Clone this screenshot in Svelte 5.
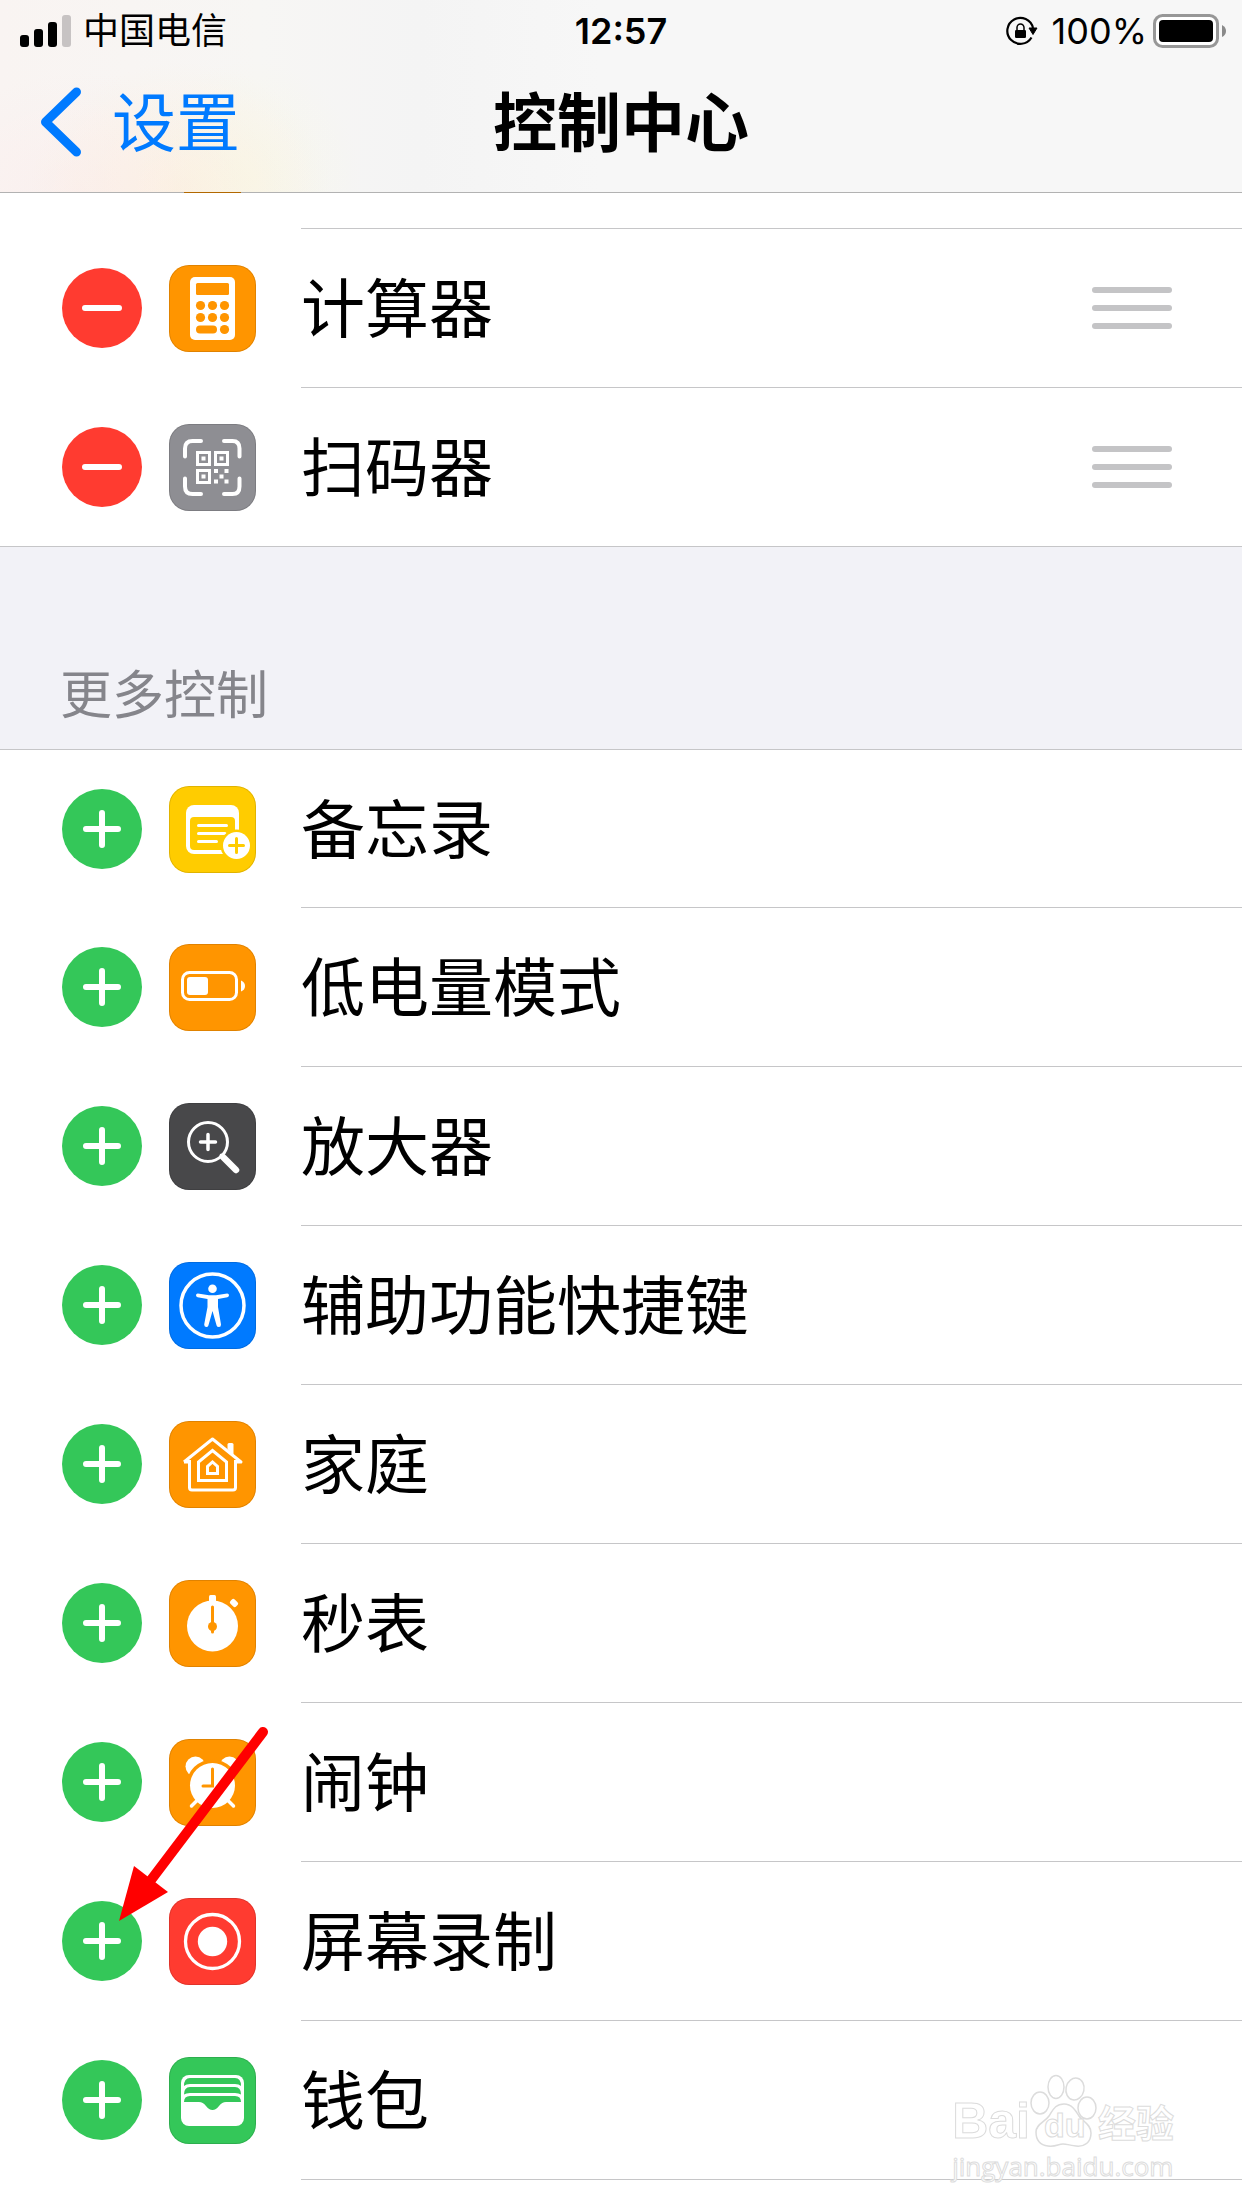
<script lang="ts">
	interface Control {
		id: string;
		name: string;
		color: string;
	}

	let included: Control[] = $state([
		{ id: 'calculator', name: '计算器', color: '#ff9500' },
		{ id: 'scanner', name: '扫码器', color: '#8e8e93' }
	]);

	let more: Control[] = $state([
		{ id: 'notes', name: '备忘录', color: '#ffcc00' },
		{ id: 'battery', name: '低电量模式', color: '#ff9500' },
		{ id: 'magnifier', name: '放大器', color: '#48484a' },
		{ id: 'accessibility', name: '辅助功能快捷键', color: '#007aff' },
		{ id: 'home', name: '家庭', color: '#ff9500' },
		{ id: 'stopwatch', name: '秒表', color: '#ff9500' },
		{ id: 'alarm', name: '闹钟', color: '#ff9500' },
		{ id: 'record', name: '屏幕录制', color: '#ff3b30' },
		{ id: 'wallet', name: '钱包', color: '#34c759' }
	]);

	function add(item: Control) {
		more = more.filter((c) => c.id !== item.id);
		included = [...included, item];
	}

	function remove(item: Control) {
		included = included.filter((c) => c.id !== item.id);
		more = [...more, item];
	}
</script>

{#snippet icon(item: Control)}
	<svg class="icon" viewBox="0 0 87 87" aria-hidden="true">
		<rect width="87" height="87" rx="20" fill={item.color} />
		<rect
			x="0.5"
			y="0.5"
			width="86"
			height="86"
			rx="19.5"
			fill="none"
			stroke="#000"
			stroke-opacity="0.12"
		/>
		{#if item.id === 'calculator'}
			<rect x="21" y="12" width="45" height="63" rx="5" fill="#fff" />
			<g fill={item.color}>
				<rect x="27" y="18" width="33" height="12" rx="1.5" />
				<circle cx="31.5" cy="40.5" r="4.6" />
				<circle cx="43.5" cy="40.5" r="4.6" />
				<circle cx="55.5" cy="40.5" r="4.6" />
				<circle cx="31.5" cy="52.5" r="4.6" />
				<circle cx="43.5" cy="52.5" r="4.6" />
				<circle cx="55.5" cy="52.5" r="4.6" />
				<rect x="27" y="60.5" width="21" height="8" rx="4" />
				<circle cx="55.5" cy="64.5" r="4.6" />
			</g>
		{:else if item.id === 'scanner'}
			<g fill="none" stroke="#fff" stroke-width="4" stroke-linecap="round">
				<path d="M32 17H23.5Q16 17 16 24.5V32.5" />
				<path d="M55 17H63.5Q70.5 17 70.5 24.5V32.5" />
				<path d="M32 70H23.5Q16 70 16 62.5V54.5" />
				<path d="M55 70H63.5Q70.5 70 70.5 62.5V54.5" />
			</g>
			<g fill="none" stroke="#fff" stroke-width="3">
				<rect x="28.5" y="28.5" width="12" height="12" />
				<rect x="46.5" y="28.5" width="12" height="12" />
				<rect x="28.5" y="46.5" width="12" height="12" />
			</g>
			<path
				fill="#fff"
				d="M32.500 32.500h4v4h-4zM50.500 32.500h4v4h-4zM32.500 50.500h4v4h-4zM45 45h4v4h-4zM55.500 45h4v4h-4zM50.500 50.500h4v4h-4zM45 55.500h4v4h-4zM55.500 55.500h4v4h-4z"
			/>
		{:else if item.id === 'notes'}
			<rect x="17" y="19" width="53" height="49" rx="8" fill="#fff" />
			<rect x="21" y="31" width="45" height="33" rx="4" fill={item.color} />
			<path
				d="M29.500 39.500H57.500M29.500 47.500H56M29.500 55.500H47.500"
				stroke="#fff"
				stroke-width="3"
				stroke-linecap="round"
			/>
			<circle cx="67.5" cy="59.5" r="16" fill={item.color} />
			<circle cx="67.5" cy="59.5" r="13.5" fill="#fff" />
			<path
				d="M60.500 59.500H74.500M67.500 52.500V66.500"
				stroke={item.color}
				stroke-width="3"
				stroke-linecap="round"
			/>
		{:else if item.id === 'battery'}
			<rect
				x="13.5"
				y="28.5"
				width="54"
				height="27"
				rx="7"
				fill="none"
				stroke="#fff"
				stroke-width="3"
			/>
			<rect x="18" y="33" width="21" height="18" rx="3" fill="#fff" />
			<path d="M72 36.500Q76 38 76 42T72 47.500Z" fill="#fff" />
		{:else if item.id === 'magnifier'}
			<g fill="none" stroke="#fff" stroke-linecap="round">
				<circle cx="39" cy="39" r="19.5" stroke-width="3" />
				<path d="M31.500 39H46.500M39 31.500V46.500" stroke-width="3.5" />
				<path d="M52.500 52.500L55 55" stroke-width="4" />
				<path d="M54.500 54.500L67 67" stroke-width="6.5" />
			</g>
		{:else if item.id === 'accessibility'}
			<circle cx="43.5" cy="43.5" r="31.5" fill="none" stroke="#fff" stroke-width="3.5" />
			<circle cx="43.5" cy="26.7" r="4.3" fill="#fff" />
			<path
				fill="#fff"
				d="M28.800 31.600L40 33.200H47L58.200 31.600Q60 31.700 60 33.300T58.400 35.200L49 37V45L52 62.500Q52 65 50 65T47.600 63.500L43.500 49L39.400 63.500Q38.800 65.200 37 65T35.200 62.500L38.500 45V37L28.600 35.200Q27 34.800 27 33.300T28.800 31.600Z"
			/>
		{:else if item.id === 'home'}
			<g fill="none" stroke="#fff" stroke-width="3" stroke-linejoin="round">
				<path d="M20.500 39V66.500Q20.500 69 23 69H64Q66.500 69 66.500 66.500V39" />
				<path d="M15 41L43.500 18L72 41H66.500M15 41H20.500" />
				<path d="M29.500 59.500V41L43.500 29.500L57.500 41V59.500Z" stroke-linejoin="miter" />
				<path d="M38.500 52.500V45.500L43.500 41L48.500 45.500V52.500Z" stroke-linejoin="miter" />
			</g>
			<path d="M58.500 28V23.500Q58.500 22 60 22H63Q64.500 22 64.500 23.500V34.500Z" fill="#fff" />
		{:else if item.id === 'stopwatch'}
			<circle cx="43.5" cy="46" r="25.5" fill="#fff" />
			<rect x="40" y="15" width="7" height="10" rx="1.5" fill="#fff" />
			<rect
				x="61"
				y="20"
				width="8"
				height="6"
				rx="2"
				fill="#fff"
				transform="rotate(45 65 23)"
			/>
			<path d="M43.500 27V52" stroke={item.color} stroke-width="3" stroke-linecap="round" />
			<circle cx="43.5" cy="46.5" r="4.5" fill={item.color} />
		{:else if item.id === 'alarm'}
			<circle cx="26.5" cy="27.5" r="10" fill="#fff" />
			<circle cx="60.5" cy="27.5" r="10" fill="#fff" />
			<circle cx="43.5" cy="46.5" r="26" fill={item.color} />
			<path
				d="M28.500 61L22.500 67M58.500 61L64.500 67"
				stroke="#fff"
				stroke-width="3.5"
				stroke-linecap="round"
			/>
			<circle cx="43.5" cy="46.5" r="22.5" fill="#fff" />
			<path
				d="M43.500 30V47H34"
				fill="none"
				stroke={item.color}
				stroke-width="3"
				stroke-linecap="round"
			/>
		{:else if item.id === 'record'}
			<circle cx="43.5" cy="43.5" r="27" fill="none" stroke="#fff" stroke-width="3.3" />
			<circle cx="43.5" cy="43.5" r="14.7" fill="#fff" />
		{:else if item.id === 'wallet'}
			<rect x="12" y="18" width="63" height="51" rx="8" fill="#fff" />
			<g fill={item.color}>
				<path d="M15 29Q15 21 21 21H66Q72 21 72 29Q70 27 66 27H21Q17 27 15 29Z" />
				<path d="M15 37.500Q15 30 21 30H66Q72 30 72 37.500Q70 36 66 36H21Q17 36 15 37.500Z" />
				<path
					d="M15 45Q15 39 21 39H66Q72 39 72 45H57Q53 45 50 49Q47 53 43.500 53T37 49Q34 45 30 45Z"
				/>
			</g>
		{/if}
	</svg>
{/snippet}

<div class="page">
	<header>
		<div class="status">
			<div class="status__left">
				<svg class="signal" viewBox="0 0 51 32" aria-hidden="true">
					<rect x="0" y="20" width="9" height="12" rx="3" />
					<rect x="14" y="14" width="9" height="18" rx="3" />
					<rect x="28" y="7" width="9" height="25" rx="3" />
					<rect x="42" y="0" width="9" height="32" rx="3" fill="#c7c3c3" />
				</svg>
				<span>中国电信</span>
			</div>
			<time>12:57</time>
			<div class="status__right">
				<svg class="lock" viewBox="0 0 32 30" aria-hidden="true">
					<path
						d="M25.500 21.500A13 13 0 1 1 27 12"
						fill="none"
						stroke="#000"
						stroke-width="2.2"
					/>
					<path d="M23 12H31L27 18.500Z" stroke="#000" stroke-linejoin="round" />
					<rect x="9" y="14" width="11" height="8" rx="1.2" />
					<path
						d="M11 14.500V11.500a3.500 3.500 0 0 1 7 0V14.500"
						fill="none"
						stroke="#000"
						stroke-width="1.5"
					/>
				</svg>
				<span>100%</span>
				<svg class="charge" viewBox="0 0 73 34" aria-hidden="true">
					<rect
						x="1.5"
						y="1.5"
						width="63"
						height="31"
						rx="8"
						fill="#fff"
						stroke="#979797"
						stroke-width="3"
					/>
					<rect x="6" y="6" width="54" height="22" rx="4" />
					<path d="M69 11Q73 13 73 17T69 23Z" fill="#8a8a8a" />
				</svg>
			</div>
		</div>
		<nav>
			<a class="back" href="#settings">
				<svg viewBox="0 0 42 70" aria-hidden="true">
					<path
						d="M36.500 5L5.500 35L36.500 65"
						fill="none"
						stroke="#007aff"
						stroke-width="9"
						stroke-linecap="round"
						stroke-linejoin="round"
					/>
				</svg>
				<span>设置</span>
			</a>
			<h1>控制中心</h1>
		</nav>
		<span class="peek"></span>
	</header>

	<main>
		<ul class="list list--included">
			<li class="row row--cut"><div class="row__body"></div></li>
			{#each included as item (item.id)}
				<li class="row">
					<button
						class="toggle toggle--remove"
						type="button"
						aria-label="移除{item.name}"
						onclick={() => remove(item)}
					>
						<svg viewBox="0 0 80 80" aria-hidden="true"><path d="M23 40H57" /></svg>
					</button>
					{@render icon(item)}
					<div class="row__body">
						<span>{item.name}</span>
						<button class="handle" type="button" aria-label="移动{item.name}">
							<i></i>
							<i></i>
							<i></i>
						</button>
					</div>
				</li>
			{/each}
		</ul>

		<h2>更多控制</h2>

		<ul class="list list--more">
			{#each more as item (item.id)}
				<li class="row">
					<button
						class="toggle"
						type="button"
						aria-label="添加{item.name}"
						onclick={() => add(item)}
					>
						<svg viewBox="0 0 80 80" aria-hidden="true"><path d="M24 40H56M40 24V56" /></svg>
					</button>
					{@render icon(item)}
					<div class="row__body">
						<span>{item.name}</span>
					</div>
				</li>
			{/each}
		</ul>
	</main>

	<svg class="arrow" viewBox="0 0 150 196" aria-hidden="true">
		<path d="M144 6L32 154" stroke="#f00" stroke-width="10" stroke-linecap="round" />
		<path d="M0 195L15 140L49 166Z" fill="#f00" />
	</svg>

	<div class="watermark">
		<div class="watermark__logo">
			<span>Bai</span>
			<div class="paw">
				<svg viewBox="0 0 68 74" aria-hidden="true">
					<g fill="#fff" stroke="#dcdcdc" stroke-width="1.5">
						<ellipse cx="10" cy="29" rx="9" ry="11" />
						<ellipse cx="26" cy="13" rx="8" ry="11.5" />
						<ellipse cx="45" cy="15" rx="9" ry="11" transform="rotate(12 45 15)" />
						<ellipse cx="57" cy="34" rx="9" ry="11" />
						<path
							d="M34 30C42 30 46 37 49 42S61 50 61 59S55 73 46 72S38 70 33 70S26 73 18 72S6 66 6 58S15 48 19 42S25 30 34 30Z"
						/>
					</g>
				</svg>
				<b>du</b>
			</div>
			<span class="cn">经验</span>
		</div>
		<div class="watermark__url">jingyan.baidu.com</div>
	</div>
</div>

<style>
	:global(body) {
		margin: 0;
		background: #fff;
	}

	.page {
		position: relative;
		min-height: 100vh;
		overflow: hidden;
		color: #000;
		font-family: 'Noto Sans CJK SC', sans-serif;
		font-size: 64px;
	}

	header {
		position: relative;
		background:
			radial-gradient(ellipse 160px 120px at 80px 192px, rgba(255, 228, 228, 0.3), transparent),
			radial-gradient(ellipse 150px 130px at 180px 192px, rgba(255, 238, 212, 0.5), transparent),
			radial-gradient(ellipse 110px 120px at 250px 180px, rgba(248, 248, 222, 0.4), transparent),
			linear-gradient(90deg, #f9f4f2, #f7f6f4 260px, #f4f4f4 420px, #f7f7f7 600px);
		border-bottom: 1px solid #b2b2b2;
	}

	.status {
		display: grid;
		grid-template-columns: 1fr auto 1fr;
		align-items: center;
		height: 62px;
		padding: 0 16px;
		font-family: Inter, 'Noto Sans CJK SC', sans-serif;
		font-size: 36px;
		line-height: 62px;
	}

	.status__left,
	.status__right {
		display: flex;
		align-items: center;
	}

	.status__left {
		gap: 12px;
		padding-left: 4px;
	}

	.status__right {
		justify-content: flex-end;
		gap: 6px;
	}

	time {
		font-weight: 600;
	}

	.signal {
		width: 51px;
		height: 32px;
	}

	.lock {
		width: 32px;
		height: 30px;
		margin-right: 8px;
	}

	.charge {
		width: 73px;
		height: 34px;
	}

	nav {
		display: grid;
		grid-template-columns: 1fr auto 1fr;
		align-items: center;
		height: 130px;
		padding: 0 40px 10px;
		box-sizing: border-box;
	}

	.back {
		display: flex;
		align-items: center;
		gap: 30px;
		color: #007aff;
		text-decoration: none;
	}

	.back svg {
		width: 42px;
		height: 70px;
	}

	/* the CJK face sits low in its line box */
	.back span,
	h1,
	.row__body span {
		padding-bottom: 8px;
	}

	h1 {
		margin: 0;
		font-size: 64px;
		font-weight: 700;
		line-height: 80px;
	}

	/* bottom edge of the row icon that is scrolled under the bar */
	.peek {
		position: absolute;
		bottom: -1px;
		left: 184px;
		width: 57px;
		height: 1px;
		background: #b26800;
	}

	.list {
		margin: 0;
		padding: 0;
		list-style: none;
		background: #fff;
	}

	.list--included .row:last-child {
		border-bottom: 1px solid #c6c6c8;
	}

	.list--included .row:last-child .row__body {
		border-bottom: 0;
	}

	.row {
		display: flex;
		align-items: center;
		padding-left: 62px;
	}

	.row--cut {
		padding-left: 301px;
	}

	.row__body {
		display: flex;
		flex: 1;
		align-items: center;
		justify-content: space-between;
		height: 158px;
		margin-left: 45px;
		padding-right: 70px;
		border-bottom: 1px solid #c6c6c8;
	}

	.row--cut .row__body {
		height: 35px;
		margin-left: 0;
	}

	.list--more .row:first-child .row__body {
		height: 157px;
	}

	.toggle {
		display: block;
		width: 80px;
		height: 80px;
		margin: 0 27px 1px 0;
		padding: 0;
		background: #34c759;
		border: 0;
		border-radius: 50%;
	}

	.toggle--remove {
		background: #ff3b30;
	}

	.toggle svg {
		display: block;
		stroke: #fff;
		stroke-width: 6;
		stroke-linecap: round;
	}

	.icon {
		width: 87px;
		height: 87px;
	}

	.handle {
		display: grid;
		gap: 12px;
		width: 80px;
		padding: 0;
		background: none;
		border: 0;
	}

	.handle i {
		height: 6px;
		background: #c4c4c6;
		border-radius: 3px;
	}

	h2 {
		margin: 0;
		padding: 106px 60px 19px;
		background: #f2f2f7;
		border-bottom: 1px solid #c6c6c8;
		color: #85858b;
		font-size: 52px;
		font-weight: 400;
		line-height: 77px;
	}

	.arrow {
		position: absolute;
		top: 1726px;
		left: 119px;
		width: 150px;
		height: 196px;
	}

	.watermark {
		position: absolute;
		top: 2074px;
		right: 68px;
		color: #fff;
		-webkit-text-stroke: 1px #dcdcdc;
	}

	.watermark__logo {
		display: flex;
		align-items: flex-end;
		height: 70px;
		font-family: 'Liberation Sans', sans-serif;
		font-size: 50px;
		font-weight: 700;
		line-height: 46px;
	}

	.watermark__logo .cn {
		font-family: 'Noto Sans CJK SC', sans-serif;
		font-size: 38px;
	}

	.paw {
		position: relative;
		width: 68px;
		height: 70px;
	}

	.paw svg {
		display: block;
	}

	.paw b {
		position: absolute;
		bottom: -4px;
		left: 14px;
		font-size: 34px;
	}

	.watermark__url {
		margin-top: 6px;
		font-family: 'Open Sans', sans-serif;
		font-size: 26px;
		line-height: 32px;
	}
</style>
